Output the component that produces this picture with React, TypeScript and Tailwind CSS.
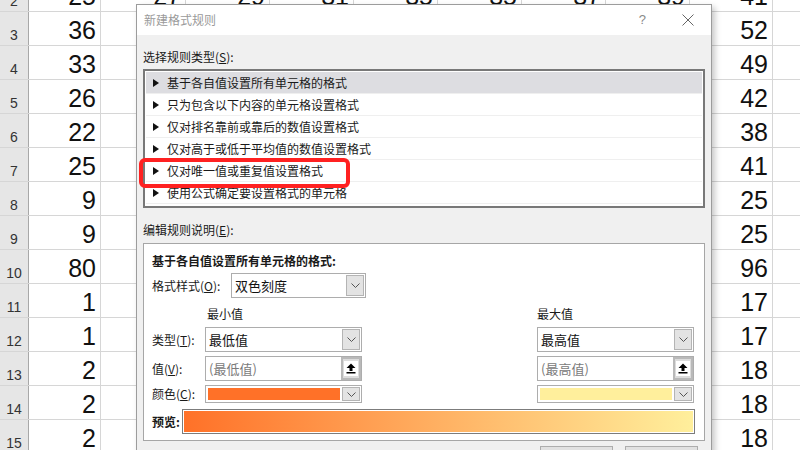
import React from 'react';

const cjk = "font-['Noto_Sans_CJK_SC','Noto_Sans',sans-serif]";

const colWidths = [72, 85, 84, 84, 84, 84, 84, 84, 83];

const rows: { n: number; a: string; i: string; mid?: string[] }[] = [
  { n: 2, a: '25', i: '41', mid: ['27', '29', '31', '35', '35', '37', '39'] },
  { n: 3, a: '36', i: '52' },
  { n: 4, a: '33', i: '49' },
  { n: 5, a: '26', i: '42' },
  { n: 6, a: '22', i: '38' },
  { n: 7, a: '25', i: '41' },
  { n: 8, a: '9', i: '25' },
  { n: 9, a: '9', i: '25' },
  { n: 10, a: '80', i: '96' },
  { n: 11, a: '1', i: '17' },
  { n: 12, a: '1', i: '17' },
  { n: 13, a: '2', i: '18' },
  { n: 14, a: '2', i: '18' },
  { n: 15, a: '2', i: '18' },
];

const ruleTypes = [
  '基于各自值设置所有单元格的格式',
  '只为包含以下内容的单元格设置格式',
  '仅对排名靠前或靠后的数值设置格式',
  '仅对高于或低于平均值的数值设置格式',
  '仅对唯一值或重复值设置格式',
  '使用公式确定要设置格式的单元格',
];

const Chevron: React.FC = () => (
  <svg width="9" height="5" viewBox="0 0 9 5" fill="none">
    <path d="M0.5 0.5 L4.5 4.5 L8.5 0.5" stroke="#555" strokeWidth="1" />
  </svg>
);

const DropButton: React.FC = () => (
  <div className="m-[1px] w-[18px] flex items-center justify-center bg-[#e3e3e3] border border-[#b4b4b4]">
    <Chevron />
  </div>
);

const Dropdown: React.FC<{ text: string; w: string }> = ({ text, w }) => (
  <div className={`${w} h-[25px] flex border border-[#adadad] bg-white`}>
    <div className="flex-1 flex items-center pl-[3px] text-[13px] text-[#111]">{text}</div>
    <DropButton />
  </div>
);

const ValueInput: React.FC<{ text: string }> = ({ text }) => (
  <div className="w-[157px] h-[25px] flex border border-[#adadad] bg-white">
    <div className="flex-1 flex items-center pl-[3px] text-[13px] text-[#7a7a7a]">{text}</div>
    <div className="w-[20px] flex items-center justify-center border-2 border-[#b9b9b9] bg-[#dcdcdc]">
      <div className="w-[14px] h-[15px] bg-white flex items-center justify-center">
        <svg width="10" height="11" viewBox="0 0 10 11">
          <path d="M5 0.5 L9.5 5 L6.5 5 L6.5 8 L3.5 8 L3.5 5 L0.5 5 Z" fill="#000" />
          <rect x="0.5" y="9" width="9" height="1.5" fill="#000" />
        </svg>
      </div>
    </div>
  </div>
);

const ColorPick: React.FC<{ color: string }> = ({ color }) => (
  <div className="w-[157px] h-[18px] flex border border-[#adadad] bg-white">
    <div className="flex-1 p-[2px] pr-[1px]">
      <div className={`h-full ${color}`} />
    </div>
    <DropButton />
  </div>
);

const App: React.FC = () => {
  return (
    <div className={`relative w-[800px] h-[450px] overflow-hidden bg-white ${cjk}`}>
      {/* sheet behind */}
      <div className="-mt-[22px] font-['Liberation_Sans',Arial,sans-serif]">
        {rows.map((r) => (
          <div key={r.n} className="flex h-[34px] border-b border-[#d6d6d6]">
            <div className="w-[29px] shrink-0 flex items-end justify-center bg-[#e6e6e6] border-r border-[#a8a8a8] text-[14px] leading-none text-[#333] pb-[3px]">
              {r.n}
            </div>
            {colWidths.map((w, ci) => {
              const val = ci === 0 ? r.a : ci === 8 ? r.i : r.mid ? r.mid[ci - 1] : '';
              return (
                <div
                  key={ci}
                  style={{ width: w }}
                  className="shrink-0 flex items-end justify-end border-r border-[#d6d6d6] pr-[4px] pb-[2px] text-[25px] leading-none text-[#111]"
                >
                  {val}
                </div>
              );
            })}
            <div className="flex-1" />
          </div>
        ))}
      </div>

      {/* dialog */}
      <div className="absolute left-[136px] top-[4px] w-[576px] h-[470px] border border-[#9c9c9c] bg-[#f0f0f0] shadow-[3px_3px_6px_rgba(0,0,0,0.22)] text-[12px] text-[#1a1a1a]">
        <div className="h-[30px] bg-white flex items-center pl-[7px]">
          <span className="text-[12px] text-[#9a9a9a]">新建格式规则</span>
          <div className="flex-1" />
          <span className="text-[13px] text-[#8a8a8a] mr-[36px] font-['Liberation_Sans',sans-serif]">?</span>
          <svg width="12" height="12" viewBox="0 0 12 12" className="mr-[17px]">
            <path d="M0.5 0.5 L11.5 11.5 M11.5 0.5 L0.5 11.5" stroke="#666" strokeWidth="1" />
          </svg>
        </div>

        <div className="px-[6px]">
          <div className="h-[34px] flex items-end pb-[3px] leading-[18px]">
            <span>
              选择规则类型(<span className="underline">S</span>):
            </span>
          </div>
          <div className="h-[139px] border-2 border-[#787878] bg-white p-[1px]">
            {ruleTypes.map((t, i) => (
              <div
                key={t}
                className={`h-[22px] flex items-center pl-[7px] border-b border-[#efefef] ${i === 0 ? 'bg-[#dddde1]' : ''}`}
              >
                <svg width="6" height="8" viewBox="0 0 6 8" className="mr-[8px]">
                  <path d="M0 0 L6 4 L0 8 Z" fill="#111" />
                </svg>
                <span>{t}</span>
              </div>
            ))}
          </div>

          <div className="h-[35px] flex items-end pb-[4px] leading-[18px]">
            <span>
              编辑规则说明(<span className="underline">E</span>):
            </span>
          </div>
          <div className="h-[198px] border border-[#a6a6a6] bg-white pl-[8px] pt-[8px]">
            <div className="h-[18px] leading-[18px] font-bold">基于各自值设置所有单元格的格式:</div>
            <div className="mt-[3px] flex items-center">
              <div className="w-[79px]">
                格式样式(<span className="underline">O</span>):
              </div>
              <Dropdown text="双色刻度" w="w-[135px]" />
            </div>
            <div className="mt-[7px] h-[18px] leading-[18px] flex mb-[4px]">
              <div className="pl-[55px] w-[385px]">最小值</div>
              <div>最大值</div>
            </div>
            <div className="flex items-center">
              <div className="w-[53px]">
                类型(<span className="underline">T</span>):
              </div>
              <Dropdown text="最低值" w="w-[157px]" />
              <div className="ml-[175px]">
                <Dropdown text="最高值" w="w-[157px]" />
              </div>
            </div>
            <div className="mt-[4px] flex items-center">
              <div className="w-[53px]">
                值(<span className="underline">V</span>):
              </div>
              <ValueInput text="(最低值)" />
              <div className="ml-[175px]">
                <ValueInput text="(最高值)" />
              </div>
            </div>
            <div className="mt-[4px] flex items-center">
              <div className="w-[53px]">
                颜色(<span className="underline">C</span>):
              </div>
              <ColorPick color="bg-[#ff7128]" />
              <div className="ml-[175px]">
                <ColorPick color="bg-[#ffef9c]" />
              </div>
            </div>
            <div className="mt-[6px] flex items-center">
              <div className="w-[30px] font-bold">预览:</div>
              <div className="w-[513px] h-[25px] border border-[#7c7c7c] bg-white p-[1px]">
                <div className="h-full bg-linear-to-r/srgb from-[#ff7128] to-[#ffef9c]" />
              </div>
            </div>
          </div>

          <div className="mt-[5px] flex justify-end gap-[12px] pr-[7px]">
            <div className="w-[73px] h-[24px] bg-[#e1e1e1] border border-[#adadad] flex items-center justify-center">确定</div>
            <div className="w-[73px] h-[24px] bg-[#e1e1e1] border border-[#adadad] flex items-center justify-center">取消</div>
          </div>
        </div>
      </div>

      {/* highlight annotation */}
      <div className="absolute left-[139px] top-[158px] w-[211px] h-[30px] border-4 border-[#ff2121] rounded-[6px]" />
    </div>
  );
};

export default App;
